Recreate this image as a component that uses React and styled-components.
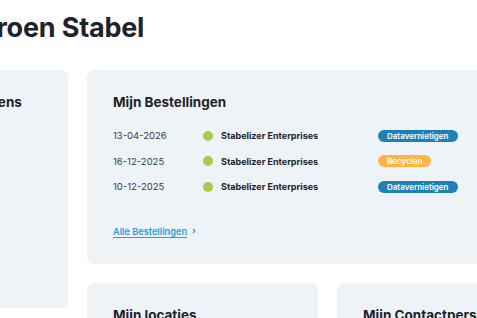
import React from 'react';
import styled, { createGlobalStyle } from 'styled-components';

const GlobalStyle = createGlobalStyle`
  html, body {
    margin: 0;
    padding: 0;
    background: #ffffff;
    overflow: hidden;
  }
  body {
    font-family: 'Inter', 'Noto Sans', sans-serif;
    color: #1f2430;
  }
`;

const Page = styled.div`
  width: 900px;
  margin-left: -102px;
  padding-top: 10px;
  display: flex;
  flex-direction: column;
  gap: 24px;
`;

const PageTitle = styled.h1`
  margin: 0;
  padding-left: 67px;
  font-size: 27px;
  line-height: 36px;
  font-weight: 700;
  letter-spacing: -0.2px;
  color: #1d222b;
`;

const Columns = styled.div`
  display: flex;
  gap: 19px;
  align-items: flex-start;
`;

const Card = styled.div`
  background: #eef3f8;
  border-radius: 7px;
  padding: 22px 26px;
  box-sizing: border-box;
  width: ${({ $w }) => $w || 'auto'};
  height: ${({ $h }) => $h || 'auto'};
  flex: none;
  display: flex;
  flex-direction: column;
`;

const RightColumn = styled.div`
  display: flex;
  flex-direction: column;
  gap: 19px;
`;

const CardRow = styled.div`
  display: flex;
  gap: 19px;
`;

const CardTitle = styled.h2`
  margin: 0;
  font-size: 13.5px;
  line-height: 20px;
  font-weight: 700;
  color: #1d222b;
  white-space: nowrap;
`;

const OrderList = styled.div`
  margin-top: 17px;
  display: flex;
  flex-direction: column;
  gap: 12px;
`;

const OrderRow = styled.div`
  display: grid;
  grid-template-columns: 90px 18px 157px auto;
  align-items: center;
  height: 13.5px;
`;

const DateText = styled.span`
  font-size: 9.5px;
  color: #353a43;
`;

const Dot = styled.span`
  width: 10px;
  height: 10px;
  border-radius: 50%;
  background: #a9c94b;
`;

const Company = styled.span`
  font-size: 9px;
  font-weight: 700;
  color: #1d222b;
  white-space: nowrap;
`;

const Badge = styled.span`
  justify-self: start;
  height: 12px;
  line-height: 12px;
  padding: 0 9px;
  border-radius: 6px;
  font-size: 8px;
  font-weight: 600;
  color: #ffffff;
  background: ${({ $kind }) => ($kind === 'recycle' ? '#ffb444' : '#1f80b6')};
`;

const MoreLink = styled.a`
  margin-top: 32px;
  display: flex;
  align-items: center;
  gap: 4px;
  font-size: 9.2px;
  font-weight: 600;
  color: #2a9ddc;
  text-decoration: none;
  span {
    text-decoration: underline;
    text-underline-offset: 1.5px;
  }
`;

const Chevron = styled.svg`
  width: 6px;
  height: 6px;
`;

const orders = [
  { date: '13-04-2026', company: 'Stabelizer Enterprises', status: 'Datavernietigen', kind: 'data' },
  { date: '16-12-2025', company: 'Stabelizer Enterprises', status: 'Recyclen', kind: 'recycle' },
  { date: '10-12-2025', company: 'Stabelizer Enterprises', status: 'Datavernietigen', kind: 'data' },
];

const App = () => {
  return (
    <>
      <GlobalStyle />
      <Page>
        <PageTitle>Jeroen Stabel</PageTitle>
        <Columns>
          <Card $w="170px" $h="238px">
            <CardTitle>Mijn Gegevens</CardTitle>
          </Card>
          <RightColumn>
            <Card $w="481px" $h="194px">
              <CardTitle>Mijn Bestellingen</CardTitle>
              <OrderList>
                {orders.map((order, i) => (
                  <OrderRow key={i}>
                    <DateText>{order.date}</DateText>
                    <Dot />
                    <Company>{order.company}</Company>
                    <Badge $kind={order.kind}>{order.status}</Badge>
                  </OrderRow>
                ))}
              </OrderList>
              <MoreLink href="#">
                <span>Alle Bestellingen</span>
                <Chevron viewBox="0 0 6 6">
                  <path d="M2 1 L4 3 L2 5" fill="none" stroke="#2a9ddc" strokeWidth="1.1" />
                </Chevron>
              </MoreLink>
            </Card>
            <CardRow>
              <Card $w="231px" $h="200px">
                <CardTitle>Mijn locaties</CardTitle>
              </Card>
              <Card $w="231px" $h="200px">
                <CardTitle>Mijn Contactpersonen</CardTitle>
              </Card>
            </CardRow>
          </RightColumn>
        </Columns>
      </Page>
    </>
  );
};

export default App;
